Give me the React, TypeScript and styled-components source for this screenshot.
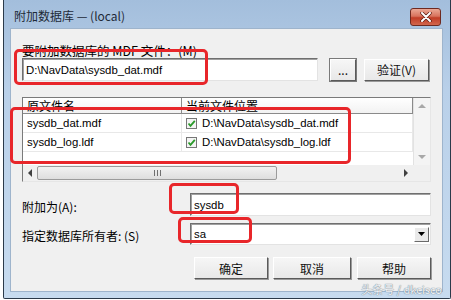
import React from "react";
import styled, { createGlobalStyle } from "styled-components";

const Global = createGlobalStyle`
  html, body { margin: 0; padding: 0; background: #ffffff; }
  body { width: 451px; height: 300px; overflow: hidden; font-family: "Liberation Sans", "Noto Sans CJK SC", sans-serif; font-size: 12px; color: #000; }
`;

const Window = styled.div`
  position: relative;
  box-sizing: border-box;
  margin-left: 3px;
  width: 448px;
  height: 299px;
  border: 1px solid #2b3a4a;
  border-top: none;
  border-radius: 0 0 2px 2px;
  background: linear-gradient(180deg, #a3bedc 0%, #b9d0e9 30%, #c7dbef 100%);
  display: flex;
  flex-direction: column;
  padding: 0 7px 6px 6px;
`;

const TitleBar = styled.div`
  height: 28px;
  display: flex;
  align-items: center;
  justify-content: space-between;
  padding-left: 4px;
  padding-right: 2px;
`;

const Title = styled.span`
  font-family: "Noto Sans CJK SC", "Liberation Sans", sans-serif;
  font-size: 12px;
  color: #1e2a38;
  padding-top: 3px;
`;

const CloseBtn = styled.div`
  width: 31px;
  height: 18px;
  margin-top: 6px;
  box-sizing: border-box;
  border: 1px solid #6e2a20;
  border-radius: 3px;
  background: linear-gradient(180deg, #eba895 0%, #d8735d 45%, #c13d26 55%, #d2664c 100%);
  display: flex;
  align-items: center;
  justify-content: center;
`;

const Content = styled.div`
  position: relative;
  flex: 1;
  background: #f0f0f0;
  border: 1px solid #9eb4cc;
  box-sizing: border-box;
  padding: 15px 11px 0 11px;
  display: flex;
  flex-direction: column;
`;

const Label = styled.div`
  font-family: "Noto Sans CJK SC", "Liberation Sans", sans-serif;
  font-size: 12.5px;
  line-height: 14px;
  height: 14px;
`;

const Row = styled.div<{ $mt?: number }>`
  display: flex;
  align-items: center;
  margin-top: ${(p) => p.$mt ?? 0}px;
`;

const TextBox = styled.div<{ $w?: number; $h?: number }>`
  box-sizing: border-box;
  width: ${(p) => (p.$w ? `${p.$w}px` : "auto")};
  flex: ${(p) => (p.$w ? "none" : "1")};
  height: ${(p) => p.$h ?? 23}px;
  background: #fff;
  border: 1px solid;
  border-color: #6f6f6f #e3e3e3 #e3e3e3 #6f6f6f;
  box-shadow: inset 1px 1px 0 #a0a0a0;
  display: flex;
  align-items: center;
  padding-left: 3px;
  font-size: 11.4px;
`;

const Btn = styled.div<{ $w: number; $ml?: number; $focus?: boolean }>`
  box-sizing: border-box;
  width: ${(p) => p.$w}px;
  height: 22px;
  margin-left: ${(p) => p.$ml ?? 0}px;
  background: linear-gradient(180deg, #f6f6f6, #e8e8e8);
  border: 1px solid;
  border-color: #ffffff #5a5a5a #5a5a5a #ffffff;
  box-shadow: ${(p) => (p.$focus ? "0 0 0 1px #7a7a7a" : "1px 1px 0 #9a9a9a")};
  display: flex;
  align-items: center;
  justify-content: center;
  font-family: "Noto Sans CJK SC", "Liberation Sans", sans-serif;
  font-size: 12px;
  color: #111;
`;

const Grid = styled.div`
  margin-top: 16px;
  height: 85px;
  box-sizing: border-box;
  border: 1px solid;
  border-color: #7a7a7a #e6e6e6 #e6e6e6 #7a7a7a;
  background: #fff;
  display: grid;
  grid-template-columns: 1fr 17px;
  grid-template-rows: 1fr 16px;
`;

const GridBody = styled.div`
  display: flex;
  flex-direction: column;
  overflow: hidden;
`;

const GridRow = styled.div<{ $header?: boolean }>`
  display: grid;
  grid-template-columns: 159px 1fr;
  height: ${(p) => (p.$header ? 15 : 18)}px;
  border-bottom: 1px solid ${(p) => (p.$header ? "#8a8a8a" : "#e8e8e8")};
  background: ${(p) => (p.$header ? "linear-gradient(180deg,#ffffff,#f2f2f2)" : "#fff")};
  font-family: ${(p) => (p.$header ? `"Noto Sans CJK SC", "Liberation Sans", sans-serif` : `"Liberation Sans", sans-serif`)};
  font-size: ${(p) => (p.$header ? 12 : 11.4)}px;
`;

const Cell = styled.div<{ $header?: boolean }>`
  display: flex;
  align-items: center;
  gap: 5px;
  padding-left: 4px;
  border-right: 1px solid ${(p) => (p.$header ? "#8a8a8a" : "#e8e8e8")};
  line-height: 14px;
  white-space: nowrap;
  overflow: hidden;
`;

const Check = styled.div`
  width: 11px;
  height: 11px;
  box-sizing: border-box;
  border: 1px solid #777;
  background: #f4f4f4;
  display: flex;
  align-items: center;
  justify-content: center;
  flex: none;
`;

const VScroll = styled.div`
  background: #f4f4f4;
  border-left: 1px solid #e2e2e2;
  display: flex;
  flex-direction: column;
  justify-content: space-between;
  align-items: center;
  padding: 5px 0;
`;

const HScroll = styled.div`
  background: #f0f0f0;
  display: flex;
  align-items: center;
  padding: 0 4px;
  gap: 4px;
`;

const Thumb = styled.div`
  width: 240px;
  height: 14px;
  box-sizing: border-box;
  border: 1px solid #9b9b9b;
  border-radius: 2px;
  background: linear-gradient(180deg, #f2f2f2, #dedede);
  display: flex;
  align-items: center;
  justify-content: center;
`;

const Corner = styled.div`
  background: #f0f0f0;
`;

const FieldRow = styled.div<{ $mt: number }>`
  display: flex;
  align-items: center;
  margin-top: ${(p) => p.$mt}px;
`;

const FieldLabel = styled.div`
  width: 168px;
  font-family: "Noto Sans CJK SC", "Liberation Sans", sans-serif;
  font-size: 12px;
  line-height: 14px;
  padding-top: 4px;
`;

const DropArrow = styled.div`
  margin-left: auto;
  margin-right: 1px;
  width: 15px;
  height: 15px;
  box-sizing: border-box;
  border: 1px solid;
  border-color: #fff #6a6a6a #6a6a6a #fff;
  background: #eaeaea;
  display: flex;
  align-items: center;
  justify-content: center;
`;

const ButtonRow = styled.div`
  display: flex;
  justify-content: flex-end;
  margin-top: 12px;
`;

const Annot = styled.div`
  position: absolute;
  box-sizing: border-box;
  border: 3px solid #e8262a;
  border-radius: 5px;
  pointer-events: none;
`;

const Watermark = styled.div`
  position: absolute;
  right: 8px;
  bottom: 1px;
  font-family: "Noto Sans CJK SC", "Liberation Sans", sans-serif;
  font-size: 11px;
  color: #f2f4f7;
  text-shadow: 0 0 1px #6f8092, 0 0 1px #6f8092;
  pointer-events: none;
`;

const Tri = ({ dir }: { dir: "up" | "down" | "left" | "right" }) => {
  const pts = {
    up: "0,5 4,1 8,5",
    down: "0,1 4,5 8,1",
    left: "5,0 1,4 5,8",
    right: "1,0 5,4 1,8",
  }[dir];
  const vertical = dir === "up" || dir === "down";
  return (
    <svg width={vertical ? 8 : 6} height={vertical ? 6 : 8} viewBox={vertical ? "0 0 8 6" : "0 0 6 8"}>
      <polygon points={pts} fill={vertical ? "#a8a8a8" : "#404040"} />
    </svg>
  );
};

const CheckMark = () => (
  <Check>
    <svg width="9" height="9" viewBox="0 0 9 9">
      <path d="M1.5 4.5 L3.5 6.8 L7.8 1.8" stroke="#2a9a2a" strokeWidth="1.8" fill="none" />
    </svg>
  </Check>
);

export default function App() {
  return (
    <>
      <Global />
      <Window>
        <TitleBar>
          <Title>附加数据库 — (local)</Title>
          <CloseBtn>
            <svg width="12" height="10" viewBox="0 0 12 10">
              <path d="M2 1 L10 9 M10 1 L2 9" stroke="#5a1a10" strokeWidth="3.4" strokeLinecap="round" />
              <path d="M2 1 L10 9 M10 1 L2 9" stroke="#ffffff" strokeWidth="2" strokeLinecap="round" />
            </svg>
          </CloseBtn>
        </TitleBar>
        <Content>
          <Label>要附加数据库的 MDF 文件：(M)</Label>
          <Row $mt={0}>
            <TextBox $w={296}>D:\NavData\sysdb_dat.mdf</TextBox>
            <Btn $w={26} $ml={12} $focus>...</Btn>
            <Btn $w={65} $ml={8}>验证(V)</Btn>
          </Row>
          <Grid>
            <GridBody>
              <GridRow $header>
                <Cell $header>原文件名</Cell>
                <Cell $header>当前文件位置</Cell>
              </GridRow>
              <GridRow>
                <Cell>sysdb_dat.mdf</Cell>
                <Cell>
                  <CheckMark />
                  D:\NavData\sysdb_dat.mdf
                </Cell>
              </GridRow>
              <GridRow>
                <Cell>sysdb_log.ldf</Cell>
                <Cell>
                  <CheckMark />
                  D:\NavData\sysdb_log.ldf
                </Cell>
              </GridRow>
            </GridBody>
            <VScroll>
              <Tri dir="up" />
              <Tri dir="down" />
            </VScroll>
            <HScroll>
              <Tri dir="left" />
              <Thumb>
                <svg width="7" height="6" viewBox="0 0 7 6">
                  <path d="M0.5 0 V6 M3.5 0 V6 M6.5 0 V6" stroke="#707070" strokeWidth="1" />
                </svg>
              </Thumb>
              <span style={{ flex: 1 }} />
              <Tri dir="right" />
            </HScroll>
            <Corner />
          </Grid>
          <FieldRow $mt={11}>
            <FieldLabel>附加为(A):</FieldLabel>
            <TextBox>sysdb</TextBox>
          </FieldRow>
          <FieldRow $mt={7}>
            <FieldLabel>指定数据库所有者: (S)</FieldLabel>
            <TextBox $h={22}>
              sa
              <DropArrow>
                <svg width="7" height="4" viewBox="0 0 7 4">
                  <polygon points="0,0 7,0 3.5,4" fill="#000" />
                </svg>
              </DropArrow>
            </TextBox>
          </FieldRow>
          <ButtonRow>
            <Btn $w={74}>确定</Btn>
            <Btn $w={78} $ml={5}>取消</Btn>
            <Btn $w={74} $ml={6}>帮助</Btn>
          </ButtonRow>
        </Content>
        <Annot style={{ left: 10, top: 49, width: 194, height: 36 }} />
        <Annot style={{ left: 6, top: 107, width: 341, height: 57 }} />
        <Annot style={{ left: 165, top: 183, width: 70, height: 31 }} />
        <Annot style={{ left: 174, top: 217, width: 74, height: 26 }} />
        <Watermark>头条号 / dkcisco</Watermark>
      </Window>
    </>
  );
}
